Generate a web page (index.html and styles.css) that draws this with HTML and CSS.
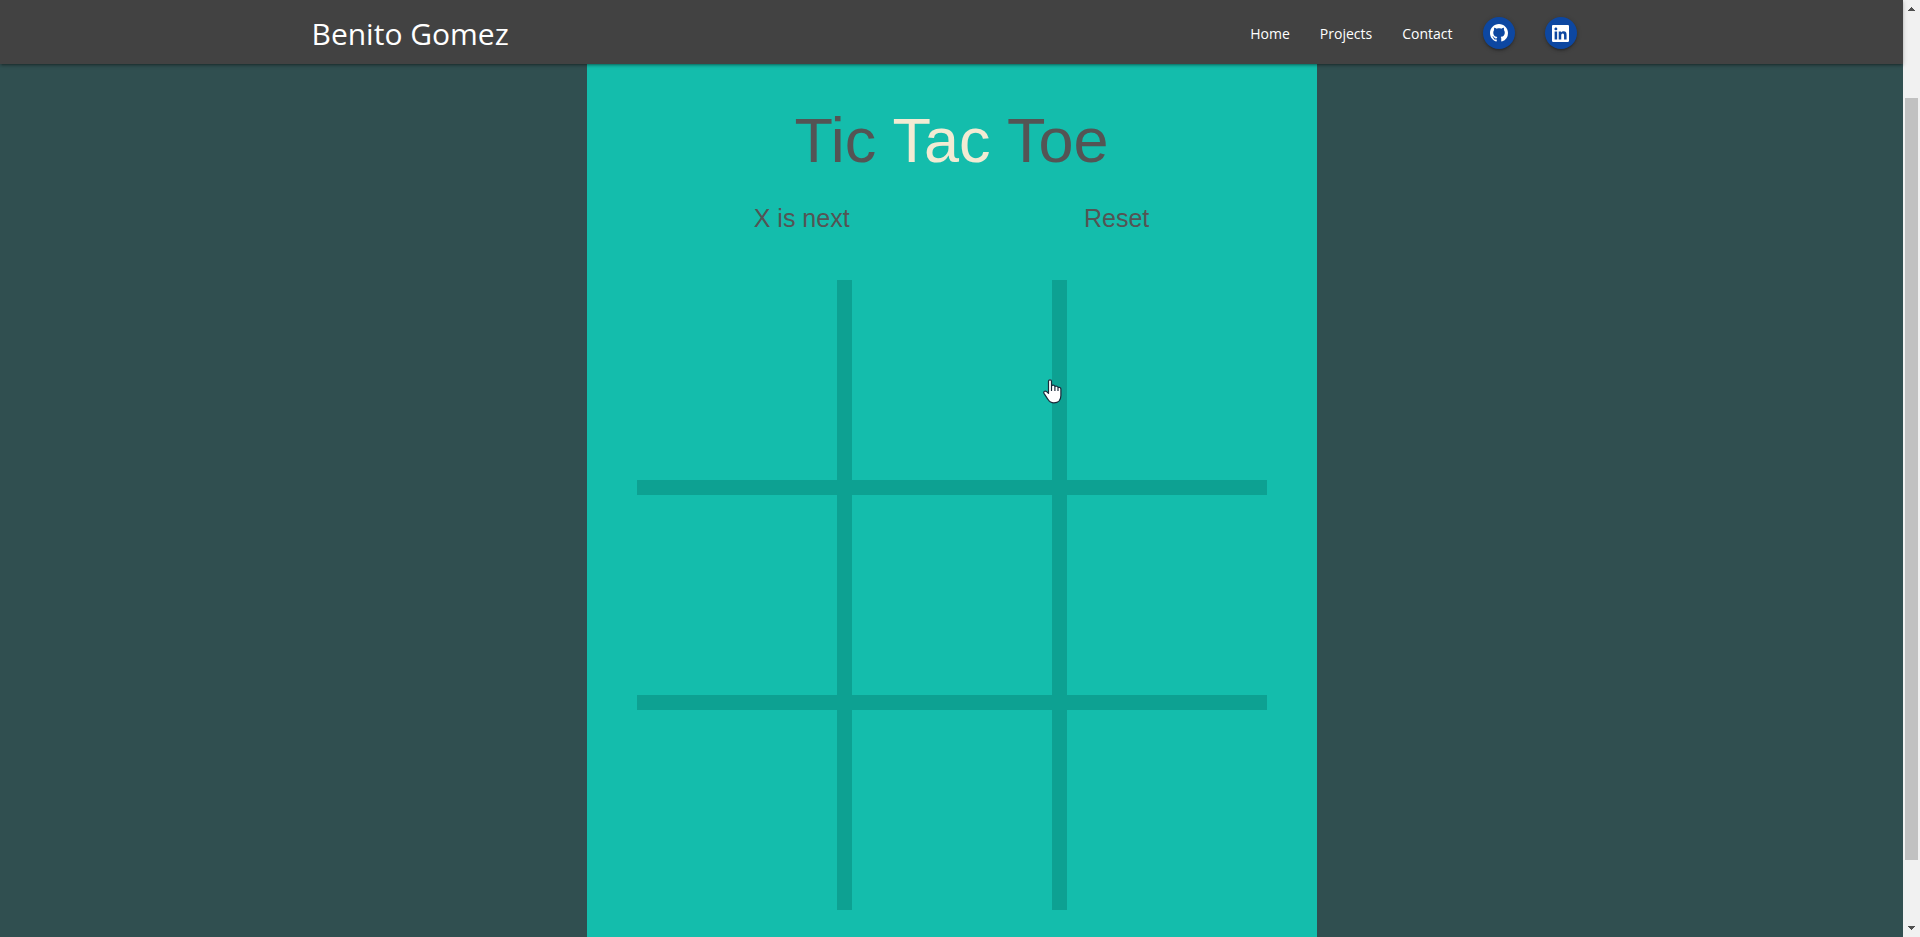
FILE: index.html
```html
<!DOCTYPE html>
<html lang="en">
<head>
<meta charset="utf-8">
<title>Tic Tac Toe</title>
<link rel="stylesheet" href="styles.css">
</head>
<body>
<div class="page">
  <header class="topbar">
    <nav class="nav">
      <a class="brand" href="#">Benito Gomez</a>
      <ul class="links">
        <li><a href="#">Home</a></li>
        <li><a href="#">Projects</a></li>
        <li><a href="#">Contact</a></li>
        <li><a class="round" href="#" aria-label="GitHub"><svg viewBox="0 0 16 16" width="18" height="18"><path fill="#fff" d="M8 0C3.58 0 0 3.58 0 8c0 3.54 2.29 6.53 5.47 7.59.4.07.55-.17.55-.38 0-.19-.01-.82-.01-1.49-2.01.37-2.53-.49-2.69-.94-.09-.23-.48-.94-.82-1.13-.28-.15-.68-.52-.01-.53.63-.01 1.08.58 1.23.82.72 1.21 1.87.87 2.33.66.07-.52.28-.87.51-1.07-1.78-.2-3.64-.89-3.64-3.95 0-.87.31-1.59.82-2.15-.08-.2-.36-1.02.08-2.12 0 0 .67-.21 2.2.82.64-.18 1.32-.27 2-.27s1.36.09 2 .27c1.53-1.04 2.2-.82 2.2-.82.44 1.1.16 1.92.08 2.12.51.56.82 1.27.82 2.15 0 3.07-1.87 3.75-3.65 3.95.29.25.54.73.54 1.48 0 1.07-.01 1.93-.01 2.2 0 .21.15.46.55.38A8.01 8.01 0 0 0 16 8c0-4.42-3.58-8-8-8z"/></svg></a></li>
        <li><a class="round" href="#" aria-label="LinkedIn"><svg viewBox="0 0 448 448" width="17" height="17"><path fill="#fff" fill-rule="evenodd" d="M416 0H31.900C14.300 0 0 14.500 0 32.300v383.400C0 433.500 14.300 448 31.900 448H416c17.600 0 32-14.500 32-32.300V32.300C448 14.500 433.600 0 416 0zM135.400 384H69V170.200h66.500V384zM102.200 141c-21.300 0-38.500-17.300-38.500-38.500S80.900 64 102.200 64c21.200 0 38.500 17.300 38.500 38.500S123.500 141 102.200 141zM384.300 384h-66.400V280c0-24.800-.5-56.700-34.500-56.700-34.600 0-39.900 27-39.900 54.900V384h-66.400V170.200h63.700v29.200h.9c8.900-16.800 30.600-34.500 62.900-34.500 67.200 0 79.700 44.300 79.700 101.900V384z"/></svg></a></li>
      </ul>
    </nav>
  </header>
  <main class="game">
    <h1 class="title">Tic <span class="accent">Tac</span> Toe</h1>
    <div class="info">
      <span>X is next</span>
      <button class="reset" type="button">Reset</button>
    </div>
    <div class="board">
      <button class="cell" type="button" aria-label="Square 1"></button>
      <button class="cell" type="button" aria-label="Square 2"></button>
      <button class="cell" type="button" aria-label="Square 3"></button>
      <button class="cell" type="button" aria-label="Square 4"></button>
      <button class="cell" type="button" aria-label="Square 5"></button>
      <button class="cell" type="button" aria-label="Square 6"></button>
      <button class="cell" type="button" aria-label="Square 7"></button>
      <button class="cell" type="button" aria-label="Square 8"></button>
      <button class="cell" type="button" aria-label="Square 9"></button>
      <svg class="pointer" viewBox="0 0 19 25" width="19" height="25"><path fill="#fff" stroke="#1a2a3a" stroke-width="1.200" stroke-linejoin="round" d="M5.500 2.200C5.500.3 8.500.3 8.500 2.200V7c.8-1.400 3.200-1 3.400.6 1-.9 3-.4 3.100 1 1.200-.6 2.900 0 2.900 1.600v6.300c0 4.300-2.500 7.400-7 7.400-3.200 0-4.600-1.300-6-3.600L1 14.300c-.8-1.500.8-2.900 2.300-1.900l2.200 2zM8.500 7v5M11.900 7.600V12M15 8.600V12"/></svg>
    </div>
  </main>
</div>
<div class="scrollbar" aria-hidden="true">
  <svg viewBox="0 0 7 4" width="7" height="4"><path fill="#505050" d="M3 0h1v1h1v1h1v1h1v1H0V3h1V2h1V1h1z"/></svg>
  <div class="track"><div class="thumb"></div></div>
  <svg viewBox="0 0 7 4" width="7" height="4"><path fill="#505050" d="M0 0h7v1H6v1H5v1H4v1H3V3H2V2H1V1H0z"/></svg>
</div>
</body>
</html>
```
FILE: styles.css
```css
* {
  box-sizing: border-box;
}

body {
  margin: 0;
  display: flex;
  min-height: 100vh;
  background: #304f50;
  font-family: "Liberation Sans", Arial, sans-serif;
}

.page {
  flex: 1;
  display: flex;
  flex-direction: column;
}

.topbar {
  position: relative;
  z-index: 1;
  background: #424242;
  box-shadow: 0 2px 2px rgba(0, 0, 0, 0.14), 0 3px 1px -2px rgba(0, 0, 0, 0.12), 0 1px 5px rgba(0, 0, 0, 0.2);
  font-family: "Open Sans", sans-serif;
}

.nav {
  display: flex;
  align-items: center;
  justify-content: space-between;
  max-width: 1280px;
  height: 64px;
  margin: 0 auto;
  padding-top: 2px;
}

.nav a {
  color: #fff;
  text-decoration: none;
}

.brand {
  font-size: 30px;
}

.links {
  display: flex;
  align-items: center;
  gap: 30px;
  margin: 0;
  padding: 0 15px;
  list-style: none;
  font-size: 14px;
}

.round {
  display: flex;
  align-items: center;
  justify-content: center;
  width: 32px;
  height: 32px;
  border-radius: 50%;
  background: #0d47a1;
  box-shadow: 0 2px 2px rgba(0, 0, 0, 0.14), 0 3px 1px -2px rgba(0, 0, 0, 0.12), 0 1px 5px rgba(0, 0, 0, 0.2);
}

.game {
  flex: 1;
  align-self: center;
  width: 100%;
  max-width: 730px;
  padding: 40px 50px 27px;
  background: #14bdac;
  color: #545454;
}

.title {
  margin: 0;
  font-size: 63px;
  font-weight: 400;
  line-height: 72px;
  text-align: center;
}

.accent {
  color: #f2ebd3;
}

.info {
  display: flex;
  justify-content: space-around;
  margin: 24px 0 44px;
  font-size: 25px;
  line-height: 36px;
}

.reset {
  padding: 0;
  border: 0;
  background: none;
  color: inherit;
  font: inherit;
  cursor: pointer;
}

.board {
  position: relative;
  display: grid;
  grid-template-columns: repeat(3, 1fr);
  gap: 15px;
  background: #0da192;
}

.cell {
  aspect-ratio: 1;
  padding: 0;
  border: 0;
  background: #14bdac;
  cursor: pointer;
}

.pointer {
  position: absolute;
  left: 406px;
  top: 99px;
}

.scrollbar {
  display: flex;
  flex-direction: column;
  align-items: center;
  width: 17px;
  padding: 7px 2px;
  background: #f1f1f1;
}

.track {
  flex: 1;
  width: 13px;
  padding: 87px 0 66px;
}

.thumb {
  height: 100%;
  background: #c1c1c1;
}
```
